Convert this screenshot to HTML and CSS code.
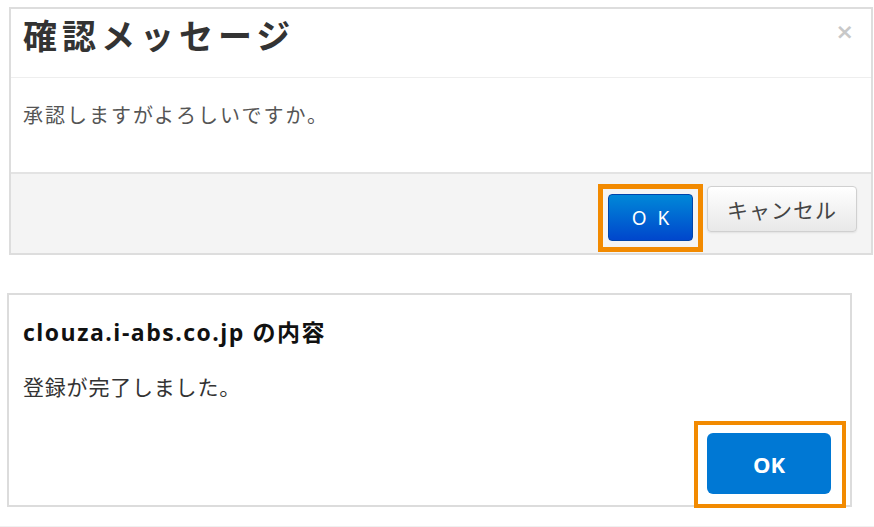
FILE: index.html
```html
<!DOCTYPE html>
<html lang="ja">
<head>
<meta charset="utf-8">
<link rel="stylesheet" href="styles.css">
</head>
<body>
<div class="page">
  <section class="modal">
    <div class="modal-header">
      <h3 class="modal-title">確認メッセージ</h3>
      <span class="close">×</span>
    </div>
    <div class="modal-body">承認しますがよろしいですか。</div>
    <div class="modal-footer">
      <span class="hl hl-1"><button class="btn btn-primary">OK</button></span>
      <button class="btn btn-default">キャンセル</button>
    </div>
  </section>

  <section class="alert">
    <div class="alert-title">clouza.i-abs.co.jp の内容</div>
    <div class="alert-text">登録が完了しました。</div>
    <div class="alert-actions">
      <span class="hl hl-2"><button class="btn-ok">OK</button></span>
    </div>
  </section>
  <div class="bottom-line"></div>
</div>
</body>
</html>
```

FILE: styles.css
```css
* { box-sizing: border-box; }
html, body { margin: 0; padding: 0; background: #fff; }
body {
  width: 874px;
  height: 527px;
  overflow: hidden;
  font-family: "Noto Sans CJK JP", "Noto Sans", sans-serif;
}
.page {
  display: flex;
  flex-direction: column;
  height: 527px;
}
.modal {
  margin: 7px 0 0 9px;
  width: 864px;
  border: 2px solid #dddddd;
  background: #fff;
  display: flex;
  flex-direction: column;
}
.modal-header {
  height: 69px;
  flex: none;
  border-bottom: 1px solid #eeeeee;
  display: flex;
  align-items: flex-start;
  justify-content: space-between;
  padding: 0 17px 0 12px;
}
.modal-title {
  margin: 0;
  padding-top: 3px;
  font-size: 34px;
  line-height: 46px;
  font-weight: 700;
  color: #333;
  letter-spacing: 5px;
}
.close {
  font-family: "DejaVu Sans", sans-serif;
  font-size: 22px;
  font-weight: 700;
  color: #c8c8c8;
  line-height: 22px;
  margin-top: 12px;
}
.modal-body {
  height: 94px;
  flex: none;
  padding: 22px 12px 0;
  font-size: 20px;
  line-height: 30px;
  color: #555;
  letter-spacing: 2px;
}
.modal-footer {
  flex: none;
  height: 81px;
  background: #f4f4f4;
  border-top: 2px solid #e3e3e3;
  display: flex;
  align-items: flex-start;
  justify-content: flex-end;
  padding: 10px 14px 0 0;
  gap: 4px;
}
.hl {
  border: 5px solid #f28a00;
  display: flex;
}
.hl-1 {
  padding: 5px 5px 6px 5px;
}
.btn {
  cursor: pointer;
}
.btn-primary {
  width: 85px;
  height: 47px;
  border: 1px solid #0044aa;
  border-radius: 4px;
  background: linear-gradient(#0088d8, #0046cc);
  color: #fff;
  font-family: "Noto Sans", sans-serif;
  font-size: 19px;
  letter-spacing: 11px;
  padding: 0 0 0 11px;
}
.btn-default {
  margin-top: 2px;
  width: 150px;
  height: 46px;
  border: 1px solid #d0d0d0;
  border-radius: 4px;
  background: linear-gradient(#ffffff, #e8e8e8);
  color: #444;
  font-family: "Noto Sans CJK JP", sans-serif;
  font-size: 21px;
  font-weight: 400;
  letter-spacing: 1px;
  padding: 0;
  box-shadow: 0 1px 2px rgba(0,0,0,0.08);
}
.alert {
  margin: 38px 0 0 7px;
  width: 845px;
  height: 214px;
  flex: none;
  border: 2px solid #dcdcdc;
  background: #fff;
  display: flex;
  flex-direction: column;
  padding: 0 0 0 14px;
}
.alert-title {
  margin-top: 22px;
  font-family: "Open Sans", "Noto Sans CJK JP", sans-serif;
  font-weight: 700;
  font-size: 23px;
  line-height: 30px;
  letter-spacing: 1.5px;
  color: #111;
}
.alert-text {
  margin-top: 24px;
  font-size: 21px;
  line-height: 30px;
  letter-spacing: 0.8px;
  color: #333;
}
.alert-actions {
  display: flex;
  justify-content: flex-end;
  margin-top: auto;
  margin-right: 4px;
  margin-bottom: -3px;
}
.hl-2 {
  padding: 8px 11px 10px 9px;
  border-width: 4px;
}
.btn-ok {
  width: 124px;
  height: 61px;
  border: none;
  border-radius: 6px;
  background: #0078d4;
  color: #fff;
  font-family: "Open Sans", sans-serif;
  font-weight: 700;
  font-size: 22px;
  padding: 0;
}
.bottom-line {
  margin-top: auto;
  height: 1px;
  background: #f0f0f0;
}
```
